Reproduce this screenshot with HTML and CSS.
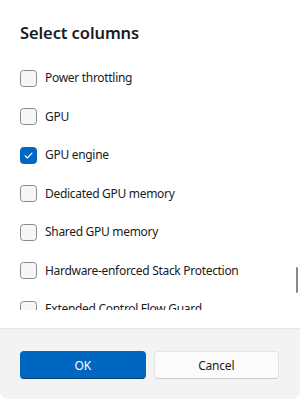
FILE: index.html
```html
<!DOCTYPE html>
<html>
<head>
<meta charset="utf-8">
<link rel="stylesheet" href="styles.css">
</head>
<body>
<div class="dialog">
  <div class="content">
    <h1 class="title">Select columns</h1>
    <div class="list">
      <label class="row"><span class="box"></span><span class="label">Power throttling</span></label>
      <label class="row"><span class="box"></span><span class="label">GPU</span></label>
      <label class="row"><span class="box checked"><svg viewBox="0 0 12 12" width="11" height="11"><path d="M2.3 6.3 L4.8 8.7 L9.8 3.5" fill="none" stroke="#fff" stroke-width="1.3" stroke-linecap="round" stroke-linejoin="round"/></svg></span><span class="label">GPU engine</span></label>
      <label class="row"><span class="box"></span><span class="label">Dedicated GPU memory</span></label>
      <label class="row"><span class="box"></span><span class="label">Shared GPU memory</span></label>
      <label class="row"><span class="box"></span><span class="label">Hardware-enforced Stack Protection</span></label>
      <label class="row"><span class="box"></span><span class="label">Extended Control Flow Guard</span></label>
    </div>
    <div class="scrollbar"></div>
  </div>
  <div class="footer">
    <button class="btn primary">OK</button>
    <button class="btn secondary">Cancel</button>
  </div>
</div>
</body>
</html>
```
FILE: styles.css
```css
html, body {
  margin: 0;
  padding: 0;
  background: #ffffff;
}
body {
  font-family: "Noto Sans", "Open Sans", sans-serif;
  color: #1b1b1b;
}
.dialog {
  width: 300px;
  height: 399px;
  display: flex;
  flex-direction: column;
  background: #ffffff;
  border-radius: 0 0 8px 8px;
  overflow: hidden;
}
.content {
  position: relative;
  height: 328px;
  padding: 0 20px 18px 20px;
  box-sizing: border-box;
  display: flex;
  flex-direction: column;
}
.title {
  margin: 0;
  height: 59px;
  padding-top: 22px;
  box-sizing: border-box;
  font-size: 16.5px;
  font-weight: 600;
  line-height: 22px;
  letter-spacing: -0.1px;
  color: #1b1b1b;
}
.list {
  flex: 1;
  overflow: hidden;
}
.row {
  display: flex;
  align-items: center;
  height: 38.5px;
  gap: 8px;
}
.box {
  width: 17px;
  height: 17px;
  box-sizing: border-box;
  border: 1px solid #8b8b8b;
  border-radius: 3.5px;
  background: #f6f6f6;
  flex: none;
  display: flex;
  align-items: center;
  justify-content: center;
}
.box.checked {
  background: #0067c0;
  border-color: #0067c0;
}
.label {
  font-size: 12px;
  letter-spacing: -0.3px;
  line-height: 16px;
  white-space: nowrap;
  color: #1b1b1b;
}
.scrollbar {
  position: absolute;
  left: 296px;
  top: 267px;
  width: 2px;
  height: 26px;
  border-radius: 1px;
  background: #8a8a8a;
}
.footer {
  flex: 1;
  background: #f3f3f3;
  border-top: 1px solid #e5e5e5;
  padding: 22px 21px 0 20px;
  display: grid;
  grid-template-columns: 1fr 1fr;
  column-gap: 8px;
  align-items: start;
}
.btn {
  height: 28px;
  border-radius: 4px;
  font-family: "Noto Sans", "Open Sans", sans-serif;
  font-size: 12px;
  letter-spacing: -0.2px;
  padding: 0;
  box-sizing: border-box;
}
.primary {
  background: #0067c0;
  color: #ffffff;
  border: 1px solid #0067c0;
  border-bottom-color: #003e73;
}
.secondary {
  background: #fbfbfb;
  color: #1b1b1b;
  border: 1px solid #e5e5e5;
  border-bottom-color: #cccccc;
}
```
